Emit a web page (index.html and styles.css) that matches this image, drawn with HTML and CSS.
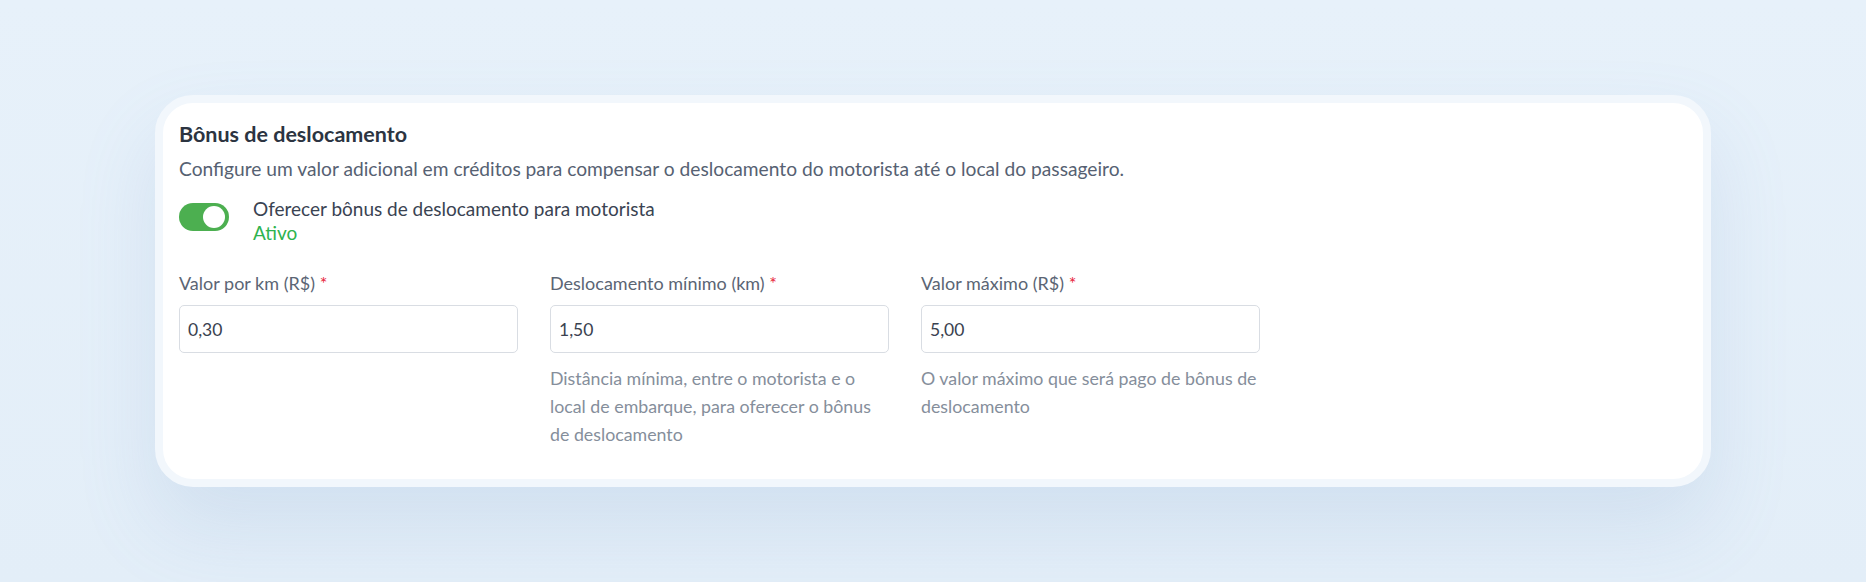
FILE: index.html
```html
<!doctype html>
<html lang="pt-BR">

<head>
  <title>Bônus de deslocamento</title>
  <meta charset="utf-8" />
  <link rel="stylesheet" href="styles.css">
</head>

<body>
  <main class="page">
    <section class="card">
      <h2 class="card-title">Bônus de deslocamento</h2>
      <p class="card-desc">Configure um valor adicional em créditos para compensar o deslocamento do motorista até o local do passageiro.</p>

      <div class="switch-row">
        <span class="switch is-on"><span class="switch-knob"></span></span>
        <div class="switch-text">
          <div class="switch-label">Oferecer bônus de deslocamento para motorista</div>
          <div class="switch-state">Ativo</div>
        </div>
      </div>

      <div class="fields">
        <div class="field">
          <label class="field-label" for="valor-km">Valor por km (R$) <span class="req">*</span></label>
          <input class="field-input" id="valor-km" type="text" value="0,30" />
        </div>
        <div class="field">
          <label class="field-label" for="desl-min">Deslocamento mínimo (km) <span class="req">*</span></label>
          <input class="field-input" id="desl-min" type="text" value="1,50" />
          <p class="field-hint">Distância mínima, entre o motorista e o local de embarque, para oferecer o bônus de deslocamento</p>
        </div>
        <div class="field">
          <label class="field-label" for="valor-max">Valor máximo (R$) <span class="req">*</span></label>
          <input class="field-input" id="valor-max" type="text" value="5,00" />
          <p class="field-hint">O valor máximo que será pago de bônus de deslocamento</p>
        </div>
      </div>
    </section>
  </main>
</body>

</html>
```

FILE: styles.css
```css
html {
  font-family: Lato, "Liberation Sans", sans-serif;
}

body {
  margin: 0;
  min-height: 100vh;
  background: linear-gradient(180deg, #e7f1fa 0%, #e3eef8 100%);
}

.page {
  padding: 95px 155px;
}

.card {
  background: #fff;
  border: 8px solid #f2f7fc;
  border-radius: 38px;
  padding: 18px 16px 31px;
  box-shadow: 0 40px 80px rgba(110, 150, 200, 0.16);
}

.card-title {
  margin: 0;
  font-size: 21.5px;
  line-height: 26px;
  font-weight: 700;
  color: #2c3441;
}

.card-desc {
  margin: 9px 0 0;
  font-size: 19.2px;
  line-height: 26px;
  color: #566172;
}

.switch-row {
  display: flex;
  align-items: flex-start;
  gap: 24px;
  margin-top: 15px;
}

.switch {
  position: relative;
  flex: none;
  width: 50px;
  height: 28px;
  margin-top: 6px;
  border-radius: 14px;
  background: #4caf50;
}

.switch-knob {
  position: absolute;
  top: 3px;
  right: 4px;
  width: 22px;
  height: 22px;
  border-radius: 50%;
  background: #fff;
}

.switch-text {
  font-size: 19px;
  line-height: 24px;
}

.switch-label {
  color: #3a4352;
}

.switch-state {
  color: #2eb34f;
}

.fields {
  display: grid;
  grid-template-columns: repeat(3, 339px);
  column-gap: 32px;
  margin-top: 27px;
}

.field-label {
  display: block;
  font-size: 18px;
  line-height: 22px;
  color: #5b6574;
}

.req {
  color: #e8243c;
}

.field-input {
  display: block;
  box-sizing: border-box;
  width: 100%;
  height: 48px;
  margin-top: 11px;
  padding: 0 8px;
  border: 1px solid #d9dde3;
  border-radius: 5px;
  font-family: inherit;
  font-size: 17.5px;
  color: #3a4250;
  background: #fff;
}

.field-hint {
  margin: 11px 0 0;
  font-size: 17.8px;
  line-height: 28px;
  color: #858e9b;
}
```
